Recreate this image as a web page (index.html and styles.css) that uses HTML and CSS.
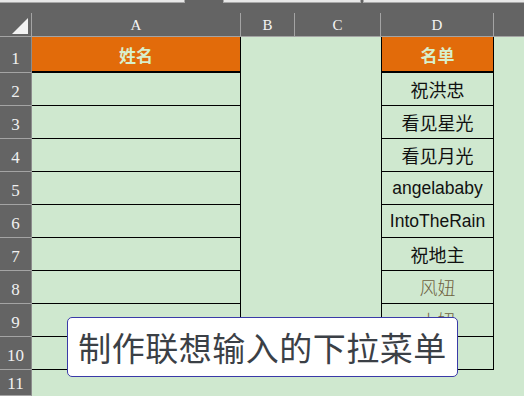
FILE: index.html
```html
<!DOCTYPE html>
<html lang="zh">
<head>
<meta charset="utf-8">
<link rel="stylesheet" href="styles.css">
</head>
<body>
<div class="sheet">
  <div class="topbar">
    <span class="tab t1"></span>
    <span class="tab t2"></span>
    <span class="tab t3"></span>
  </div>
  <div class="grid">
    <div class="corner"><svg width="32" height="24" viewBox="0 0 32 24"><polygon points="28,5 28,21 12,21" fill="#f2f2f2"/></svg></div>
    <div class="ch">A</div>
    <div class="ch">B</div>
    <div class="ch">C</div>
    <div class="ch">D</div>
    <div class="ch last"></div>

    <div class="rh r1">1</div>
    <div class="c a head">姓名</div>
    <div class="c"></div>
    <div class="c"></div>
    <div class="c d head">名单</div>
    <div class="c"></div>

    <div class="rh">2</div><div class="c a"></div><div class="c"></div><div class="c"></div><div class="c d">祝洪忠</div><div class="c"></div>
    <div class="rh">3</div><div class="c a"></div><div class="c"></div><div class="c"></div><div class="c d">看见星光</div><div class="c"></div>
    <div class="rh">4</div><div class="c a"></div><div class="c"></div><div class="c"></div><div class="c d">看见月光</div><div class="c"></div>
    <div class="rh">5</div><div class="c a"></div><div class="c"></div><div class="c"></div><div class="c d latin">angelababy</div><div class="c"></div>
    <div class="rh">6</div><div class="c a"></div><div class="c"></div><div class="c"></div><div class="c d latin">IntoTheRain</div><div class="c"></div>
    <div class="rh">7</div><div class="c a"></div><div class="c"></div><div class="c"></div><div class="c d">祝地主</div><div class="c"></div>
    <div class="rh">8</div><div class="c a"></div><div class="c"></div><div class="c"></div><div class="c d soft">风妞</div><div class="c"></div>
    <div class="rh">9</div><div class="c a"></div><div class="c"></div><div class="c"></div><div class="c d soft">小妞</div><div class="c"></div>
    <div class="rh">10</div><div class="c a"></div><div class="c"></div><div class="c"></div><div class="c d soft">胖妞</div><div class="c"></div>
    <div class="rh r11">11</div><div class="c"></div><div class="c"></div><div class="c"></div><div class="c"></div><div class="c"></div>
  </div>
  <div class="caption">制作联想输入的下拉菜单</div>
</div>
</body>
</html>
```
FILE: styles.css
```css
html, body {
  margin: 0;
  padding: 0;
  background: #cfe8cf;
  overflow: hidden;
}
.sheet {
  position: relative;
  width: 524px;
  height: 396px;
  overflow: hidden;
}
.topbar {
  height: 13px;
  background: #646464;
  position: relative;
}
.tab {
  position: absolute;
  top: 0;
  height: 2px;
  background: #e8e8e8;
  border-bottom: 1px solid #a8a8a8;
}
.t1 { left: 0; width: 184px; border-right: 1px solid #a8a8a8; }
.t2 { left: 223px; width: 136px; border-left: 1px solid #a8a8a8; border-right: 1px solid #a8a8a8; }
.t3 { left: 363px; width: 161px; border-left: 1px solid #a8a8a8; }

.grid {
  display: grid;
  grid-template-columns: 32px 209px 54px 86px 113px 30px;
  grid-template-rows: 24px 36px repeat(9, 33px) 26px;
}
.corner {
  background: #646464;
  border-bottom: 1px solid #a4a4a4;
  border-right: 1px solid #a4a4a4;
  box-sizing: border-box;
  line-height: 0;
}
.ch {
  background: #646464;
  border-right: 1px solid #a4a4a4;
  border-bottom: 1px solid #a4a4a4;
  box-sizing: border-box;
  color: #f4f4f4;
  font-family: "Liberation Serif", "DejaVu Serif", serif;
  font-size: 15px;
  display: flex;
  align-items: flex-end;
  justify-content: center;
  padding-bottom: 2px;
}
.ch.last { border-right: none; }
.rh {
  background: #646464;
  border-bottom: 1px solid #a4a4a4;
  border-right: 1px solid #8c8c8c;
  box-sizing: border-box;
  color: #f0f0f0;
  font-family: "Liberation Serif", "DejaVu Serif", serif;
  font-size: 17px;
  display: flex;
  align-items: flex-end;
  justify-content: center;
  padding-bottom: 3px;
}
.rh.r11 { padding-bottom: 1px; }
.c {
  box-sizing: border-box;
  display: flex;
  align-items: center;
  justify-content: center;
  font-family: "Noto Sans CJK SC", "Noto Sans", sans-serif;
  font-size: 18px;
  color: #111;
}
.c.a {
  border-right: 1px solid #000;
  border-bottom: 1px solid #000;
}
.c.d {
  border-left: 1px solid #000;
  border-right: 1px solid #000;
  border-bottom: 1px solid #000;
}
.c.head {
  background: #e26b0a;
  color: #d8efcc;
  font-weight: bold;
  font-size: 17px;
  border-bottom: 2px solid #000;
}
.c.latin {
  font-family: "Liberation Sans", Arial, sans-serif;
  font-size: 17.5px;
}
.c.soft {
  color: #6e6040;
  font-weight: 300;
}
.caption {
  position: absolute;
  left: 67px;
  top: 317px;
  width: 391px;
  height: 60px;
  box-sizing: border-box;
  background: #fff;
  border: 1px solid #3a3aa8;
  border-radius: 5px;
  display: flex;
  align-items: center;
  justify-content: center;
  font-family: "Noto Sans CJK SC", "Noto Sans", sans-serif;
  font-size: 33px;
  color: #3b4046;
  letter-spacing: 0.5px;
}
```
